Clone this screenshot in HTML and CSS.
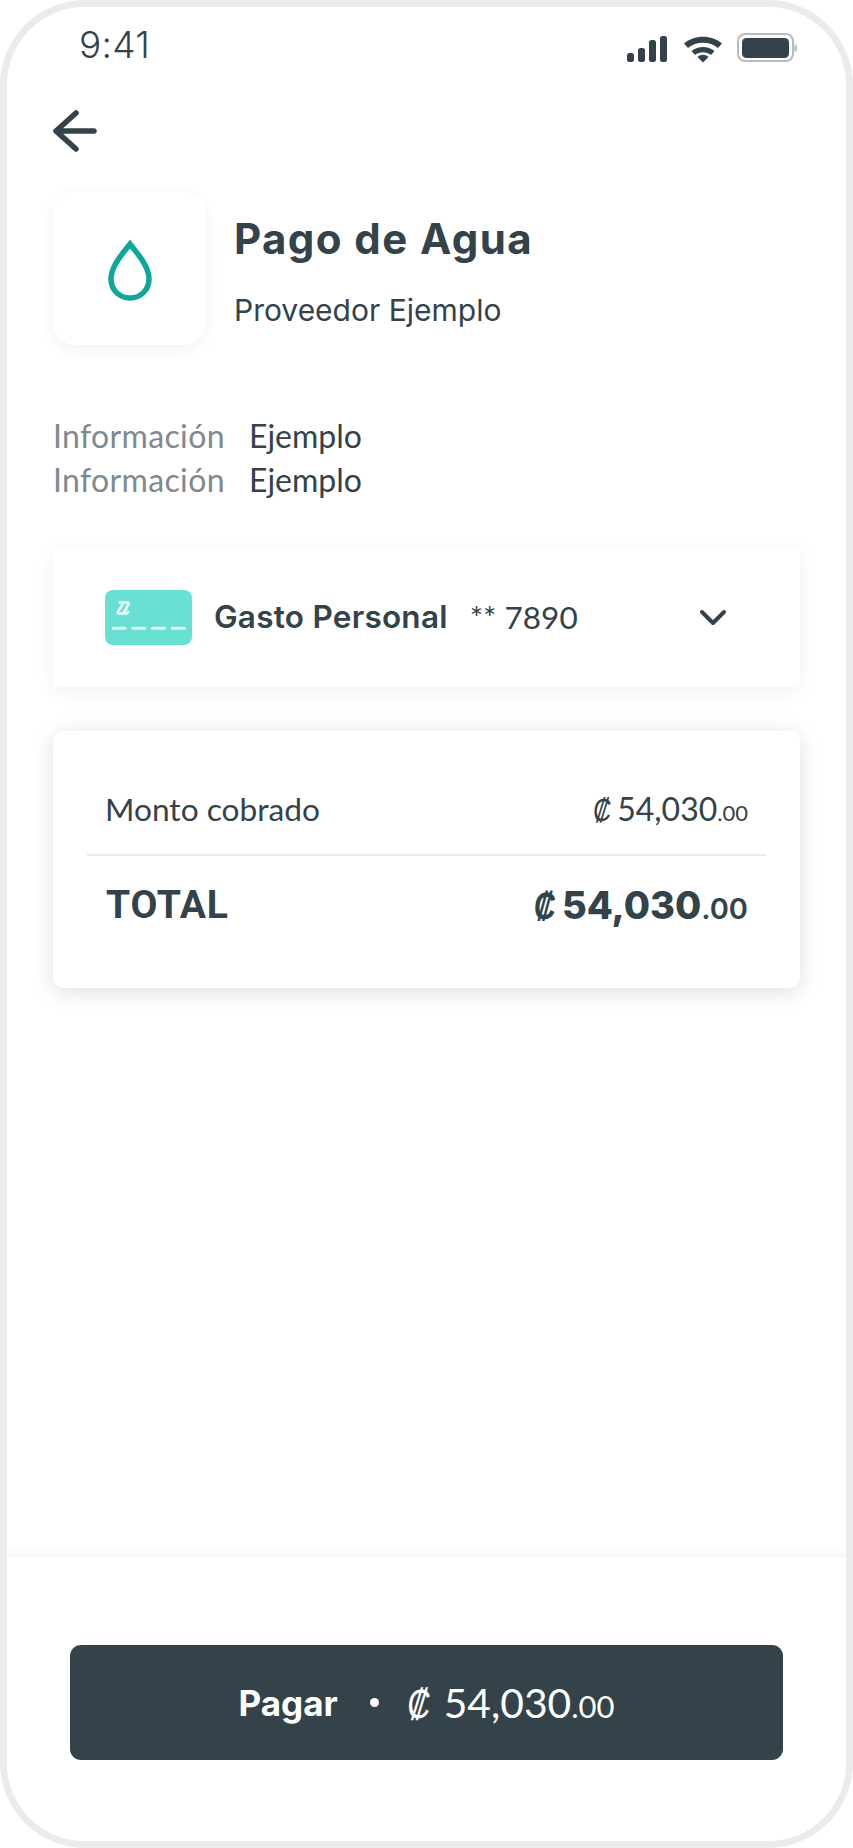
FILE: index.html
```html
<!DOCTYPE html>
<html lang="es">
<head>
<meta charset="utf-8">
<title>Pago de Agua</title>
<link rel="stylesheet" href="styles.css">
</head>
<body>
<div class="frame">
  <div class="status">
    <span class="time">9:41</span>
    <svg class="status-icons" width="171" height="30" viewBox="0 0 171 30">
      <rect x="1" y="20" width="7" height="9" rx="2.5" fill="#344249"/>
      <rect x="12" y="15" width="7" height="14" rx="2.5" fill="#344249"/>
      <rect x="23" y="7" width="7" height="22" rx="2.5" fill="#344249"/>
      <rect x="34" y="3" width="7" height="26" rx="2.5" fill="#344249"/>
      <path d="M58 10.500 C68 1.500 86 1.500 96 10.500 L92 15 C84 8 70 8 62 15 Z" fill="#344249"/>
      <path d="M65.500 18 C72 12.500 82 12.500 88.500 18 L85 22 C80.500 18.200 73.500 18.200 69 22 Z" fill="#344249"/>
      <path d="M71.500 24 C75 21 79 21 82.500 24 L77 29.500 Z" fill="#344249"/>
      <rect x="112" y="1" width="55" height="27" rx="7" fill="none" stroke="#b7bcbf" stroke-width="2"/>
      <rect x="116" y="5" width="47" height="20" rx="4.500" fill="#344249"/>
      <path d="M168.500 11 C172 12 172 18 168.500 19 Z" fill="#b7bcbf"/>
    </svg>
  </div>
  <main class="main">
    <svg class="back" width="44" height="42" viewBox="0 0 44 42">
      <path d="M23 3 L3 21 L23 39 M3 21 H41" fill="none" stroke="#344249" stroke-width="5.500" stroke-linecap="round" stroke-linejoin="round"/>
    </svg>
    <header class="provider">
      <div class="tile">
        <svg width="48" height="66" viewBox="0 -3 48 66">
          <path d="M24 5 C17 14 5 27 5 40 C5 51 13.500 59 24 59 C34.500 59 43 51 43 40 C43 27 31 14 24 5 Z" fill="none" stroke="#0fa898" stroke-width="5.500" stroke-linejoin="miter"/>
        </svg>
      </div>
      <div class="provider-text">
        <h1 class="title">Pago de Agua</h1>
        <p class="subtitle">Proveedor Ejemplo</p>
      </div>
    </header>
    <dl class="info">
      <div class="info-row"><dt>Información</dt><dd>Ejemplo</dd></div>
      <div class="info-row"><dt>Información</dt><dd>Ejemplo</dd></div>
    </dl>
    <section class="account">
      <svg class="card-art" width="87" height="55" viewBox="0 0 87 55">
        <rect width="87" height="55" rx="8" fill="#68e0d3"/>
        <path d="M14.500 12.500 H22.500 Q24.500 12.500 23.500 14.500 L19 22.500 M18.500 13 L13 21.500 Q12 23.500 14 23.500 H21.500 Q22.800 23.500 23.300 22" fill="none" stroke="#eefbf9" stroke-width="2.600" stroke-linecap="round" stroke-linejoin="round"/>
        <path d="M8.200 38.300 H20.200 M27.800 38.300 H39.800 M47.500 38.300 H59.500 M67.200 38.300 H79.500" stroke="#e4f8f5" stroke-width="3" stroke-linecap="round"/>
      </svg>
      <span class="account-name">Gasto Personal</span>
      <span class="account-number">** 7890</span>
      <svg class="chevron" width="28" height="18" viewBox="0 0 28 18">
        <path d="M3 3 L14 14 L25 3" fill="none" stroke="#344249" stroke-width="4" stroke-linecap="round" stroke-linejoin="round"/>
      </svg>
    </section>
    <section class="summary">
      <div class="summary-row">
        <span class="summary-label">Monto cobrado</span>
        <span class="amount"><span class="colon">₡</span> 54,030<small class="cents">.00</small></span>
      </div>
      <div class="divider"></div>
      <div class="summary-row total-row">
        <span class="total-label">TOTAL</span>
        <span class="amount total-amount"><span class="colon">₡</span> 54,030<small class="cents">.00</small></span>
      </div>
    </section>
  </main>
  <footer class="footer">
    <button class="pay">
      <span class="pay-label">Pagar</span>
      <span class="pay-dot"></span>
      <span class="pay-amount"><span class="colon">₡</span> 54,030<small class="cents">.00</small></span>
    </button>
  </footer>
</div>
</body>
</html>
```
FILE: styles.css
```css
* { box-sizing: border-box; }
html, body { margin: 0; padding: 0; background: #fff; }
body { width: 853px; height: 1848px; font-family: "Inter", "Liberation Sans", sans-serif; color: #344249; }

.frame {
  width: 853px;
  height: 1848px;
  border: 7px solid #e9ebed;
  border-radius: 85px;
  background: #fff;
  overflow: hidden;
  display: flex;
  flex-direction: column;
}

.status {
  height: 82px;
  flex: none;
  display: flex;
  align-items: center;
  justify-content: space-between;
  padding: 0 49px 0 72px;
}
.time { font-size: 37px; font-weight: 300; margin-top: -7px; letter-spacing: .3px; }
.status-icons { display: block; }

.main {
  flex: 1;
  display: flex;
  flex-direction: column;
  align-items: stretch;
  padding: 0 46px;
}
.back { display: block; margin-top: 21px; }

.provider { display: flex; align-items: flex-start; margin-top: 40px; }
.tile {
  width: 153px;
  height: 153px;
  border-radius: 22px;
  background: #fff;
  box-shadow: 0 4px 16px rgba(0,0,0,.06);
  display: flex;
  align-items: center;
  justify-content: center;
  flex: none;
}
.provider-text { margin-left: 28px; padding-top: 23px; }
.title { margin: 0; font-size: 42px; line-height: 48px; font-weight: 700; letter-spacing: 1.4px; }
.subtitle { margin: 30px 0 0; font-size: 30px; line-height: 34px; font-weight: 400; }

.info { margin: 69px 0 0; }
.info-row { display: flex; height: 43.500px; align-items: center; font-family: "Lato", sans-serif; font-size: 32px; }
.info-row dt { width: 196px; color: #7f8a8f; letter-spacing: .35px; }
.info-row dd { margin: 0; }

.account {
  margin-top: 46px;
  height: 140px;
  flex: none;
  display: flex;
  align-items: center;
  padding: 0 0 0 52px;
  background: #fff;
  box-shadow: 0 4px 20px rgba(0,0,0,.06);
}
.card-art { display: block; flex: none; }
.account-name { margin-left: 22px; font-family: "Inter", sans-serif; font-weight: 600; font-size: 31.500px; letter-spacing: .25px; margin-top: -1px; }
.account-number { margin-left: 22px; font-family: "Lato", sans-serif; font-size: 31.500px; margin-top: -1px; }
.chevron { margin-left: auto; margin-right: 73px; margin-top: 2px; display: block; }

.summary {
  margin-top: 44px;
  height: 257px;
  flex: none;
  padding: 0 34px;
  background: #fff;
  border-radius: 10px;
  box-shadow: 0 4px 22px rgba(0,0,0,.13);
  display: flex;
  flex-direction: column;
}
.summary-row { display: flex; justify-content: space-between; align-items: center; padding: 32px 18px 0 19px; height: 123px; flex: none; }
.summary-label { font-family: "Lato", sans-serif; font-size: 31.700px; margin-left: -1px; }
.divider { height: 2px; background: #e9ebed; flex: none; }
.total-row { height: 98px; padding-top: 0; }
.total-label { font-family: "Roboto", sans-serif; font-weight: 700; font-size: 39px; letter-spacing: .8px; }

.amount { font-family: "Lato", sans-serif; font-size: 32px; }
.cents { font-size: 22px; }
.colon {
  display: inline-block;
  font-family: "Liberation Sans", sans-serif;
  font-weight: 400;
  transform: translateX(2px) skewX(-5deg) scaleX(.78);
  transform-origin: right center;
}
.total-amount { font-family: "Inter", sans-serif; font-weight: 800; font-size: 38px; }
.total-amount .colon { font-weight: 700; }
.total-amount .cents { font-size: 29px; font-weight: 600; }

.footer {
  flex: none;
  height: 284px;
  padding: 88px 63px 81px;
  background: #fff;
  box-shadow: 0 -3px 8px rgba(0,0,0,.05);
}
.pay {
  width: 100%;
  height: 115px;
  border: 0;
  border-radius: 11px;
  background: #344249;
  color: #fff;
  display: flex;
  align-items: center;
  justify-content: center;
  font-family: "Inter", sans-serif;
  padding: 0;
}
.pay-label { font-size: 35px; font-weight: 700; }
.pay-dot { width: 9px; height: 9px; border-radius: 50%; background: #fff; margin: 0 32px; }
.pay-amount { font-family: "Lato", sans-serif; font-size: 40.800px; font-weight: 400; }
.pay-amount .colon { margin-left: -7px; transform: translateX(-3px) skewX(-5deg) scaleX(.78); }
.pay-amount .cents { font-size: 31px; }
```
